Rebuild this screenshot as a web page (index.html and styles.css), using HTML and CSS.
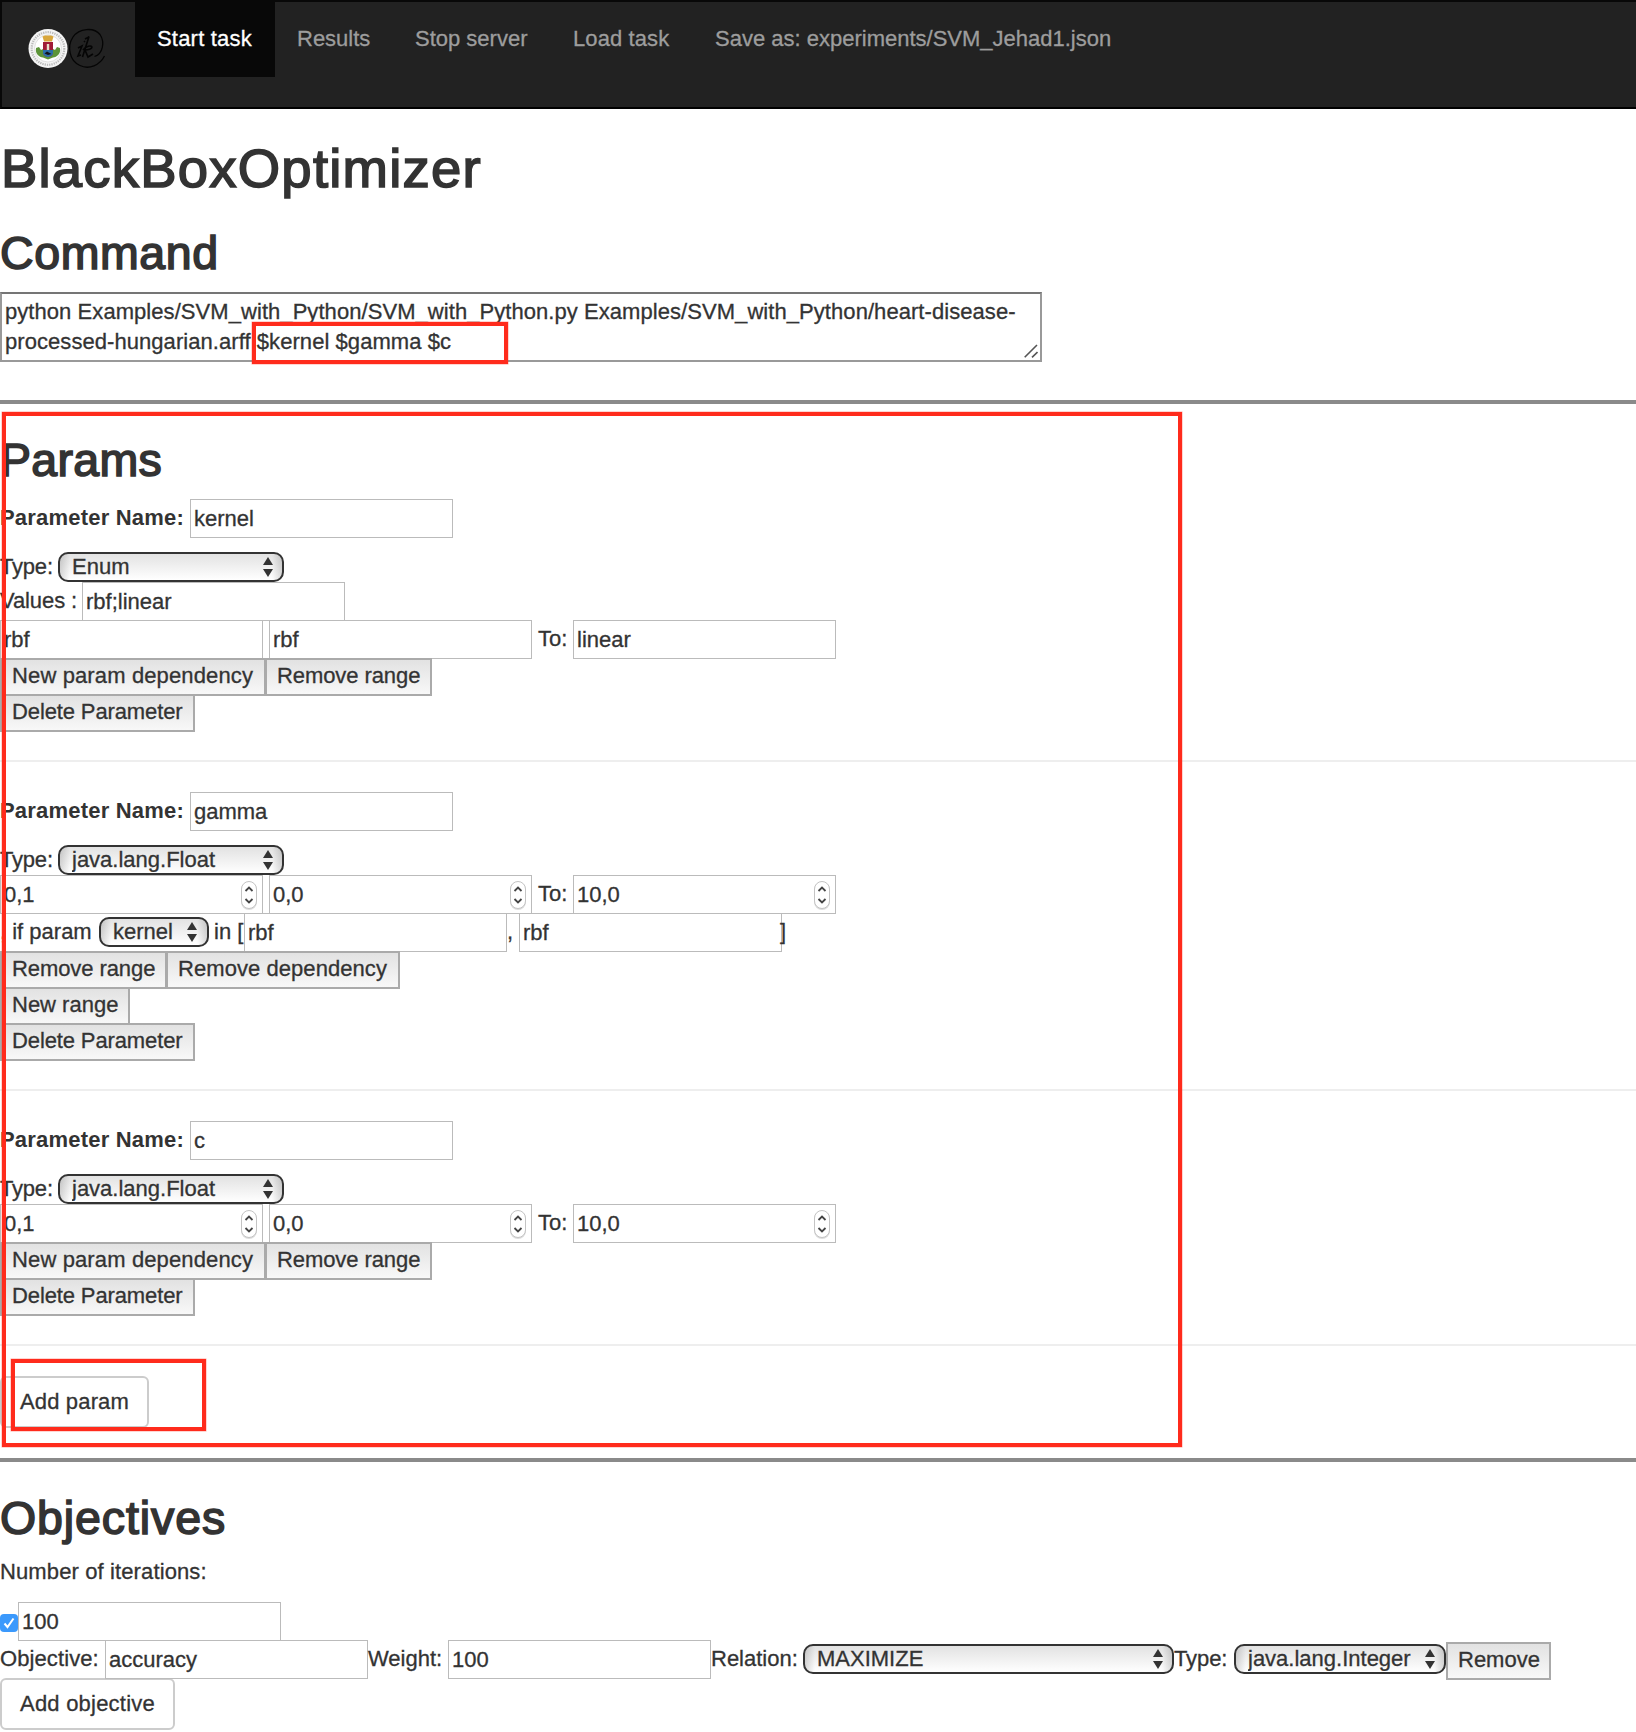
FILE: index.html
```html
<!DOCTYPE html>
<html lang="en">
<head>
<meta charset="utf-8">
<title>BlackBoxOptimizer</title>
<link rel="stylesheet" href="styles.css">
</head>
<body>
<svg class="defs" width="0" height="0" aria-hidden="true">
  <symbol id="arrows" viewBox="0 0 10 22"><path d="M5 1L10 9H0zM5 21L10 13H0z" fill="#333"/></symbol>
  <symbol id="stepper" viewBox="0 0 18 31">
    <rect x="1" y="2" width="16" height="28" rx="8" fill="#ddd"/>
    <rect x="1.5" y="1.5" width="15" height="27" rx="7.5" fill="#fff" stroke="#c4c4c4"/>
    <path d="M5.500 11L9 7.500L12.500 11M5.500 19L9 22.500L12.500 19" fill="none" stroke="#444" stroke-width="1.800"/>
  </symbol>
</svg>

<nav class="navbar">
  <a class="brand" href="#">
    <svg width="80" height="42" viewBox="0 0 80 42">
      <circle cx="20" cy="20.500" r="19.500" fill="#f4f4f4"/>
      <circle cx="20" cy="20.500" r="16.300" fill="none" stroke="#bbb" stroke-width="2.200" stroke-dasharray="1.300 1"/>
      <circle cx="20" cy="20.500" r="13.500" fill="#fff" stroke="#ccc" stroke-width=".6"/>
      <path d="M8 20L11 19L13 22L15 21V26L20 29L25 26V21L27 22L29 19L32 20C33 26 29 29 25 29.500L20 31.500L15 29.500C11 29 7 26 8 20z" fill="#5c9438"/>
      <path d="M14.500 8.500L17 7.500H23L25.500 8.500L24 13.500H16z" fill="#d8a63c"/>
      <path d="M15 14H25V25Q25 28 20 29Q15 28 15 25z" fill="#a01c36"/>
      <path d="M15 22H25V25Q25 28 20 29Q15 28 15 25z" fill="#2a6fa8"/>
      <path d="M18.800 16H21.200V22H18.800z" fill="#e6dcc8"/>
      <path d="M16.500 25.500L19 23.500L23.500 26L20 27z" fill="#10131c"/>
      <g fill="none" stroke="#050505" stroke-width="1.300">
        <path d="M76.500 28C72 37 61 42 52 37.500C41 33 39 18 45 9C51 0 66 -1 72 6.500C77 14 75 26 66.500 28.500"/>
        <path d="M50 20L54 18L50 28L53 27M61 8.500L54.500 29M61 9L57 11M55 22C58 18 63 17 64 19C64 21 60 22 57 22L60 29L65 26M56 14L57 13" stroke-width="1.600"/>
      </g>
    </svg>
  </a>
  <a class="nav-item active" href="#">Start task</a>
  <a class="nav-item results" href="#">Results</a>
  <a class="nav-item stop" href="#">Stop server</a>
  <a class="nav-item load" href="#">Load task</a>
  <a class="nav-item" href="#">Save as: experiments/SVM_Jehad1.json</a>
</nav>

<h1>BlackBoxOptimizer</h1>

<h2 class="command-title">Command</h2>
<div class="command">
  <div class="command-text">python Examples/SVM_with_Python/SVM_with_Python.py Examples/SVM_with_Python/heart-disease-<br>processed-hungarian.arff $kernel $gamma $c</div>
  <svg class="grip" width="14" height="14" viewBox="0 0 14 14"><path d="M.7 13.300L13 1M8 13.300L13.500 8" stroke="#555" stroke-width="1.600" fill="none"/></svg>
</div>

<hr class="thick">
<h2 class="params-title">Params</h2>

<section class="param">
  <div class="row name-row"><label class="label name">Parameter Name:</label><input class="field" value="kernel"></div>
  <div class="row type-row"><label class="label type">Type:</label><span class="picker wide"><select><option>Enum</option></select><svg><use href="#arrows"/></svg></span></div>
  <div class="row"><label class="label values">Values :</label><input class="field" value="rbf;linear"></div>
  <div class="row range"><input class="field" value="rbf"><input class="field second" value="rbf"><label class="label to">To:</label><input class="field" value="linear"></div>
  <div class="row buttons"><button class="new-dependency">New param dependency</button><button class="remove-range">Remove range</button></div>
  <div class="row buttons"><button class="delete">Delete Parameter</button></div>
</section>
<hr>

<section class="param">
  <div class="row name-row"><label class="label name">Parameter Name:</label><input class="field" value="gamma"></div>
  <div class="row type-row"><label class="label type">Type:</label><span class="picker wide"><select><option>java.lang.Float</option></select><svg><use href="#arrows"/></svg></span></div>
  <div class="row range">
    <span class="number"><input class="field" value="0,1"><svg><use href="#stepper"/></svg></span>
    <span class="number second"><input class="field" value="0,0"><svg><use href="#stepper"/></svg></span>
    <label class="label to">To:</label>
    <span class="number"><input class="field" value="10,0"><svg><use href="#stepper"/></svg></span>
  </div>
  <div class="row dependency">
    <label class="label if">, if param</label>
    <span class="picker small"><select><option>kernel</option></select><svg><use href="#arrows"/></svg></span>
    <label class="label in">in [</label><input class="field" value="rbf">
    <span class="label comma">,</span><input class="field" value="rbf"><span class="label bracket">]</span>
  </div>
  <div class="row buttons"><button class="remove-range">Remove range</button><button class="remove-dependency">Remove dependency</button></div>
  <div class="row buttons"><button class="new-range">New range</button></div>
  <div class="row buttons"><button class="delete">Delete Parameter</button></div>
</section>
<hr>

<section class="param">
  <div class="row name-row"><label class="label name">Parameter Name:</label><input class="field" value="c"></div>
  <div class="row type-row"><label class="label type">Type:</label><span class="picker wide"><select><option>java.lang.Float</option></select><svg><use href="#arrows"/></svg></span></div>
  <div class="row range">
    <span class="number"><input class="field" value="0,1"><svg><use href="#stepper"/></svg></span>
    <span class="number second"><input class="field" value="0,0"><svg><use href="#stepper"/></svg></span>
    <label class="label to">To:</label>
    <span class="number"><input class="field" value="10,0"><svg><use href="#stepper"/></svg></span>
  </div>
  <div class="row buttons"><button class="new-dependency">New param dependency</button><button class="remove-range">Remove range</button></div>
  <div class="row buttons"><button class="delete">Delete Parameter</button></div>
</section>
<hr>

<button class="add add-param">Add param</button>

<hr class="thick">
<h2 class="objectives-title">Objectives</h2>
<p class="iterations">Number of iterations:</p>
<div class="row iteration-row">
  <svg class="check" width="18" height="18" viewBox="0 0 18 18"><rect width="18" height="18" rx="4" fill="#3b99fc"/><path d="M4.500 9.500L7.500 13L13.500 4.500" fill="none" stroke="#fff" stroke-width="2"/></svg>
  <input class="field" value="100">
</div>
<div class="row objective">
  <label class="label objective-label">Objective:</label><input class="field" value="accuracy">
  <label class="label weight">Weight:</label><input class="field" value="100">
  <label class="label relation">Relation:</label><span class="picker relation-picker"><select><option>MAXIMIZE</option></select><svg><use href="#arrows"/></svg></span>
  <label class="label objective-type">Type:</label><span class="picker type-picker"><select><option>java.lang.Integer</option></select><svg><use href="#arrows"/></svg></span>
  <button class="remove">Remove</button>
</div>
<button class="add add-objective">Add objective</button>

<div class="mark mark-args"></div>
<div class="mark mark-params"></div>
<div class="mark mark-add"></div>
</body>
</html>
```
FILE: styles.css
```css
* { box-sizing: border-box; }
body {
  margin: 0;
  width: 1636px;
  height: 1732px;
  position: relative;
  overflow: hidden;
  background: #fff;
  color: #333;
  font: 22px/30px "Liberation Sans", Arial, sans-serif;
  -webkit-text-stroke: .3px;
}
svg { display: block; }
.defs { position: absolute; }

/* navigation */
.navbar {
  display: flex;
  align-items: flex-start;
  height: 109px;
  background: #222;
  border: 2px solid #080808;
  border-right: 0;
  border-bottom-color: #000;
}
.brand { width: 133px; padding: 26px 0 0 26px; }
.nav-item {
  height: 75px;
  padding: 22px 22px 0;
  color: #9d9d9d;
  text-decoration: none;
  white-space: nowrap;
}
.active { width: 140px; background: #080808; color: #fff; letter-spacing: .2px; }
.results { width: 118px; }
.stop { width: 158px; }
.load { width: 142px; letter-spacing: .1px; }

/* headings and rules */
h1, h2 { margin: 0; font-weight: 400; -webkit-text-stroke: 1.600px #333; }
h1 { margin-top: 29px; padding-left: 1px; font-size: 54.500px; line-height: 62px; letter-spacing: 1.200px; }
h2 { font-size: 46.500px; line-height: 52px; letter-spacing: .6px; }
.command-title { margin-top: 27px; }
.params-title { margin-top: 30px; letter-spacing: .3px; }
.objectives-title { margin-top: 30px; letter-spacing: .9px; }
hr { margin: 28px 0 30px; border: 0; height: 2px; background: #eee; }
.thick { margin: 0; height: 4px; background: #8a8a8a; }

/* command box */
.command {
  display: flex;
  align-items: flex-end;
  justify-content: space-between;
  width: 1042px;
  height: 70px;
  margin: 13px 0 38px;
  padding: 0 2px 2px 3px;
  border: 2px solid #999;
  border-top-color: #757575;
}
.command-text { align-self: flex-start; padding-top: 3px; white-space: nowrap; letter-spacing: .06px; }

/* form rows */
.row { display: flex; align-items: flex-start; height: 38px; }
.name-row { height: 53px; }
.type-row { height: 30px; }
.buttons { height: 36px; }
.buttons:last-child { height: 38px; }
.params-title + .param { margin-top: 13px; }
.label { flex: none; line-height: 30px; padding-top: 4px; white-space: pre; }
.name { width: 190px; font-weight: 700; letter-spacing: .2px; -webkit-text-stroke: 0; }
.type { width: 58px; padding-top: 0; letter-spacing: -.2px; }
.values { width: 82px; letter-spacing: -.1px; }
.to { width: 41px; padding-left: 6px; }
.if { width: 99px; }
.in { width: 35px; padding-left: 5px; }
.comma { width: 12px; }
.bracket { margin-left: -2px; }

.field {
  flex: none;
  width: 263px;
  height: 39px;
  margin: 0;
  padding: 0 3px;
  border: 1px solid #bbb;
  border-radius: 0;
  background: #fff;
  color: #333;
  font: inherit;
  outline: 0;
}
.second { margin-left: 6px; }

.number, .picker { display: grid; flex: none; }
.number > *, .picker > * { grid-area: 1 / 1; }
.number svg { width: 18px; height: 31px; justify-self: end; margin: 5px 5px 0 0; pointer-events: none; }

.picker svg { width: 10px; height: 22px; justify-self: end; align-self: center; margin-right: 11px; pointer-events: none; }
.picker select {
  appearance: none;
  width: 100%;
  height: 30px;
  margin: 0;
  padding: 0 0 1px 12px;
  border: 2px solid #333;
  border-radius: 10px;
  background:
    linear-gradient(90deg, rgba(0,0,0,.14), transparent 10px, transparent calc(100% - 10px), rgba(0,0,0,.14)),
    linear-gradient(#e2e2e2, #fff);
  color: #333;
  font: inherit;
  line-height: 25px;
}
.wide { width: 226px; }
.small { width: 110px; }
.small svg { margin-right: 12px; }
.dependency .picker { margin-top: 4px; }

button {
  flex: none;
  height: 38px;
  margin: 0;
  padding: 0 0 3px 10px;
  border: 2px solid #aaa;
  border-radius: 0;
  background: linear-gradient(#e2e2e2, #f8f8f8);
  color: #333;
  font: inherit;
  text-align: left;
  white-space: nowrap;
}
.buttons button + button { margin-left: -1px; }
.new-range { width: 130px; }
.remove-range { width: 167px; letter-spacing: -.08px; }
.delete { width: 195px; letter-spacing: -.12px; }
.remove-dependency { width: 234px; letter-spacing: .06px; }
.new-dependency { width: 266px; letter-spacing: .13px; }

.add {
  display: block;
  height: 52px;
  padding: 0 0 0 18px;
  border-color: #ccc;
  border-radius: 6px;
  background: #fff;
  letter-spacing: .15px;
}
.add-param { width: 149px; margin-bottom: 30px; }
.add-objective { width: 175px; letter-spacing: .22px; }

/* objectives */
.iterations { margin: 13px 0 15px; line-height: 30px; letter-spacing: .12px; }
.check { flex: none; margin-top: 12px; }
.objective-label { width: 105px; letter-spacing: .1px; }
.weight { width: 80px; }
.relation { width: 92px; }
.objective-type { width: 60px; letter-spacing: -.1px; }
.relation-picker { width: 371px; margin-top: 4px; }
.type-picker { width: 212px; margin-top: 4px; }
.remove { width: 105px; margin-top: 2px; padding-bottom: 2px; }

/* annotation frames laid over the page */
.mark {
  position: absolute;
  border: 4px solid #ff2b1c;
  box-shadow: 0 0 0 .5px rgba(255,43,28,.4);
  pointer-events: none;
}
.mark-args { left: 252px; top: 322px; width: 256px; height: 42px; }
.mark-params { left: 2px; top: 412px; width: 1180px; height: 1035px; }
.mark-add { left: 11px; top: 1359px; width: 195px; height: 72px; }
```
